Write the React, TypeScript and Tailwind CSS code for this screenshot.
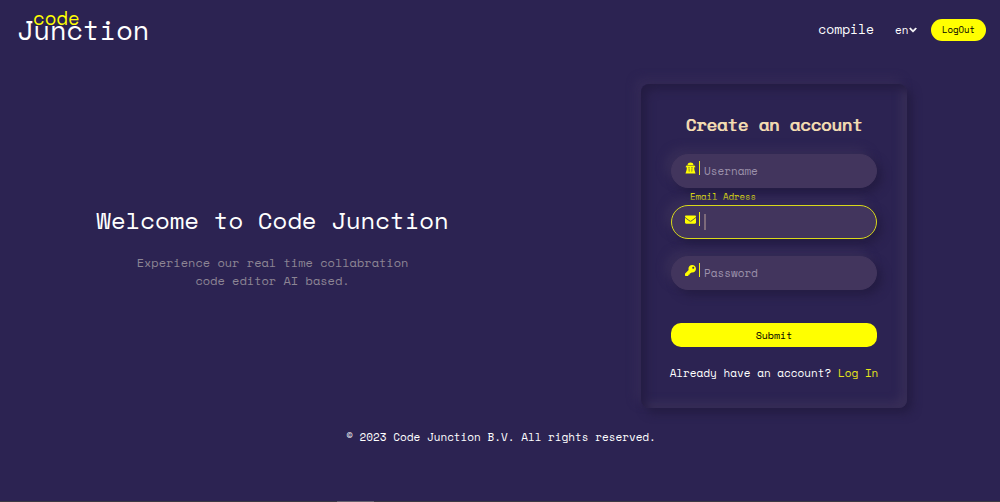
import { useId, useState } from "react";
import type { ReactNode } from "react";
import { FaChevronDown, FaEnvelope, FaKey } from "react-icons/fa";

type FieldProps = {
  label: string;
  type: string;
  icon: ReactNode;
  active?: boolean;
};

function UserIcon() {
  return (
    <svg viewBox="0 0 22 24" className="h-3 w-[11px]" fill="currentColor" aria-hidden="true">
      <path d="M5 6C5.500 2.500 8 1 11 1s5.500 1.500 6 5z" />
      <path d="M3 7h16l2 3.500H1z" />
      <path d="M3.500 10h3.500v3h2v-3h4v3h2v-3h3.500v6h-3.500v-1.500h-2V19h-4v-4.500h-2V16h-3.500z" />
      <path d="M3.500 15h4v4h2v-3h3v3h2v-4h4l2.500 8H1z" />
    </svg>
  );
}

function Field({ label, type, icon, active = false }: FieldProps) {
  const id = useId();
  const [value, setValue] = useState("");
  return (
    <div className="flex flex-col">
      {active && (
        <label htmlFor={id} className="h-[17px] pl-[19px] text-[9px] leading-[18px] text-[#ffff00]">
          {label}
        </label>
      )}
      <div
        className={`flex h-[34px] items-center rounded-full border bg-[#42355d] pl-[13px] shadow-[5px_5px_10px_#241c43,-5px_-5px_10px_#382e58] ${active ? "border-[#d9d91a]" : "border-[#42355d]"}`}
      >
        <span className="mb-[6px] flex h-[14px] w-[15px] shrink-0 items-center border-r border-[#f2f20d] text-[11px] text-[#ffff00]">
          {icon}
        </span>
        {active && <span className="ml-1 h-4 w-[2px] shrink-0 bg-[#7d6a7b]" aria-hidden="true" />}
        <input
          id={id}
          type={type}
          value={value}
          onChange={(event) => setValue(event.target.value)}
          aria-label={label}
          placeholder={active ? "" : label}
          className="ml-1 min-w-0 flex-1 bg-transparent pr-4 text-[11px] text-white outline-none placeholder:text-[#9c91ab]"
        />
      </div>
    </div>
  );
}

function Header() {
  return (
    <header className="flex h-[60px] items-center justify-between pr-[14px] pl-[17px]">
      <a href="#home" className="relative block text-[27px] leading-8 text-white" aria-label="Code Junction">
        <span className="absolute -top-2 left-4 text-[19px] leading-6 text-[#ffff00]">code</span>
        Junction
      </a>
      <nav className="flex items-center">
        <a href="#compile" className="mr-[21px] text-[13px] text-white">
          compile
        </a>
        <div className="mr-[14px] flex items-center text-[11px] text-white">
          <select
            aria-label="Language"
            defaultValue="en"
            className="w-[14px] appearance-none bg-transparent outline-none"
          >
            <option value="en">en</option>
            <option value="nl">nl</option>
          </select>
          <FaChevronDown className="pointer-events-none size-2" stroke="currentColor" strokeWidth={40} />
        </div>
        <button type="button" className="h-[22px] w-[55px] rounded-full bg-[#ffff00] text-[9px] text-black">
          LogOut
        </button>
      </nav>
    </header>
  );
}

export default function App() {
  return (
    <div className="flex min-h-screen flex-col bg-[#2c2352] font-['Space_Mono','Liberation_Mono',monospace]">
      <Header />
      <main className="flex items-center pt-6 pr-[93px]">
        <section className="flex flex-1 flex-col items-center pr-24 text-center">
          <h1 className="text-[24px] leading-[34px] text-white">Welcome to Code Junction</h1>
          <p className="mt-[17px] max-w-[300px] text-[12px] leading-[18px] text-[#8c8594]">
            Experience our real time collabration
            <br />
            code editor AI based.
          </p>
        </section>
        <form
          onSubmit={(event) => event.preventDefault()}
          className="flex w-[266px] shrink-0 flex-col rounded-lg px-[30px] pt-[30px] pb-[26px] shadow-[5px_5px_10px_#241c43,-5px_-5px_10px_#352b57,inset_5px_5px_10px_#241c43,inset_-5px_-5px_10px_#3a3059]"
        >
          <h2 className="text-center text-[17px] leading-[22px] font-normal whitespace-nowrap text-[#f5deb3] [text-shadow:1px_0_#f5deb3]">
            Create an account
          </h2>
          <div className="mt-[18px] flex flex-col">
            <Field label="Username" type="text" icon={<UserIcon />} />
            <Field label="Email Adress" type="email" icon={<FaEnvelope />} active />
            <div className="mt-[17px]">
              <Field label="Password" type="password" icon={<FaKey />} />
            </div>
          </div>
          <button type="submit" className="mt-[33px] h-6 rounded-[10px] bg-[#ffff00] text-[10px] text-black">
            Submit
          </button>
          <p className="mt-[17px] flex justify-center text-[11px] leading-[18px] whitespace-pre text-white">
            Already have an account?{" "}
            <a href="#login" className="text-[#e6e619]">
              Log In
            </a>
          </p>
        </form>
      </main>
      <footer className="mt-5 pl-[2px] text-center text-[11px] leading-[18px] text-white">
        © 2023 Code Junction B.V. All rights reserved.
      </footer>
      <div className="mt-auto flex h-px justify-start bg-[#3c3a45] pl-[337px]">
        <div className="w-[37px] bg-[#66626e]" />
      </div>
    </div>
  );
}
